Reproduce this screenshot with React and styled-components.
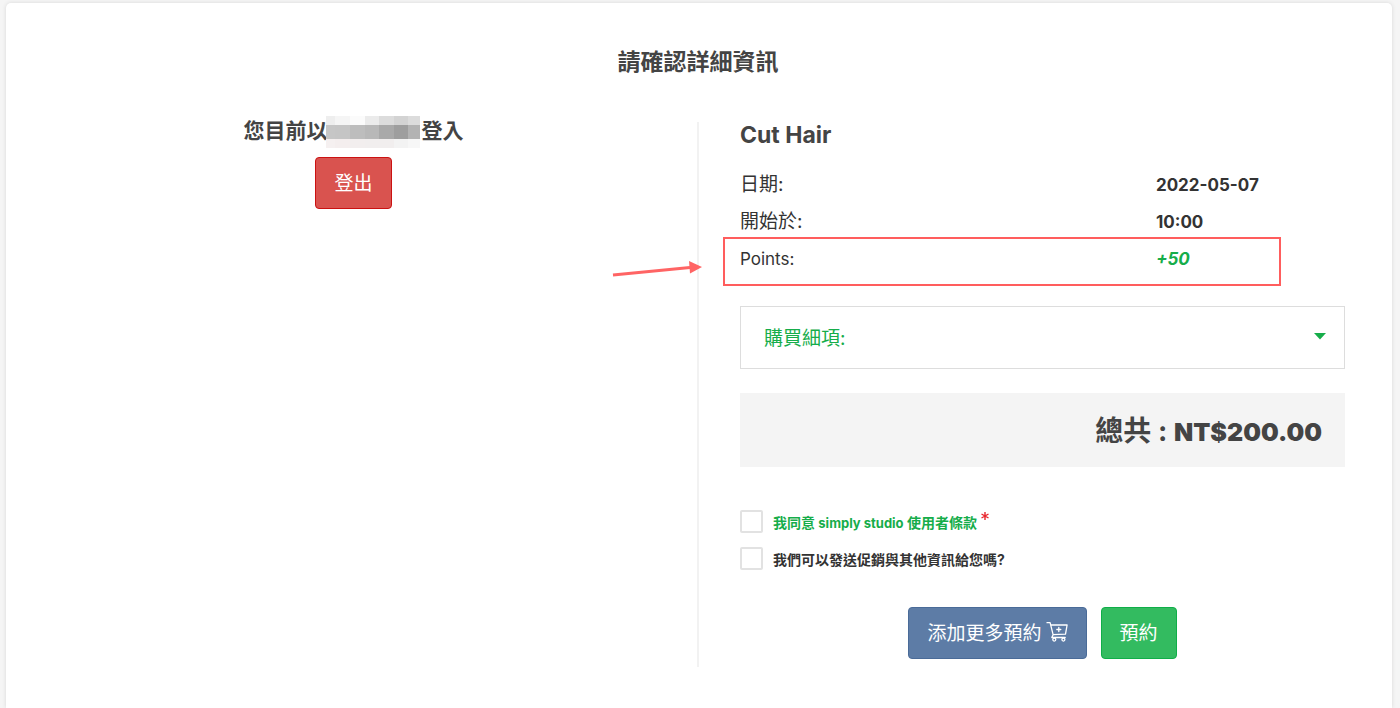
import React, { useState } from "react";
import styled, { createGlobalStyle, css } from "styled-components";

const GlobalStyle = createGlobalStyle`
  * {
    box-sizing: border-box;
  }

  body {
    margin: 0;
    background: #f5f5f5;
    color: #333;
    font-family: Inter, "Noto Sans CJK TC", sans-serif;
    font-size: 18px;
  }

  button {
    font-family: inherit;
    cursor: pointer;
  }
`;

const Card = styled.main`
  min-height: calc(100vh - 3px);
  margin: 3px 8px 0 6px;
  padding: 43px 47px 40px 45px;
  background: #fff;
  border-radius: 5px 5px 0 0;
  box-shadow: 0 0 4px rgba(0, 0, 0, 0.12);
`;

const Title = styled.h1`
  margin: 0 0 38px;
  font-size: 23px;
  line-height: 32px;
  font-weight: 700;
  text-align: center;
  color: #444;
`;

const Columns = styled.div`
  display: flex;
`;

const Account = styled.section`
  flex: 1;
  padding-right: 41px;
  text-align: center;
`;

const Details = styled.section`
  flex: 1;
  margin-top: 6px;
  padding: 0 0 8px 41px;
  border-left: 2px solid #f2f2f2;
`;

const LoginText = styled.h2`
  display: flex;
  justify-content: center;
  margin: 0 0 9px;
  height: 32px;
  font-size: 21px;
  line-height: 30px;
  font-weight: 700;
  color: #444;
`;

const HiddenName = styled.svg`
  width: 94px;
  height: 32px;
  margin: 0 2px 0 -2px;
`;

const tones = {
  red: css`
    background: #d9534f;
    border-color: #cb1212;
  `,
  blue: css`
    background: #5d7ca6;
    border-color: #4a6b98;
  `,
  green: css`
    background: #33bb60;
    border-color: #0fae48;
  `,
};

const Button = styled.button`
  display: inline-flex;
  align-items: center;
  gap: 4px;
  height: 52px;
  padding: 0 18px 4px;
  border: 1px solid;
  border-radius: 4px;
  font-size: 19px;
  color: #fff;
  ${({ $tone }) => tones[$tone]}
`;

const ServiceName = styled.h2`
  margin: 0 0 18px;
  font-size: 23px;
  line-height: 26px;
  font-weight: 700;
  color: #444;
`;

const List = styled.dl`
  margin: 0;
`;

const Row = styled.div`
  position: relative;
  display: grid;
  grid-template-columns: 11fr 5fr;
  align-items: center;
  height: 37px;
`;

const Term = styled.dt`
  ${({ $latin }) =>
    $latin
      ? css`
          font-size: 17px;
        `
      : css`
          padding-bottom: 4px;
          font-size: 19px;
        `}
`;

const Value = styled.dd`
  margin: 0;
  font-size: 17px;
  font-weight: 700;
  ${({ $points }) =>
    $points &&
    css`
      font-style: italic;
      color: #16ad4a;
    `}
`;

const Highlight = styled.span`
  position: absolute;
  top: -3px;
  bottom: -9px;
  left: -17px;
  right: 64px;
  border: 2px solid #ff5d5d;
`;

const Arrow = styled.svg`
  position: absolute;
  top: 20px;
  left: -128px;
  width: 90px;
  height: 20px;
`;

const Breakdown = styled.button`
  display: flex;
  align-items: center;
  justify-content: space-between;
  width: 100%;
  height: 63px;
  margin-top: 29px;
  padding: 0 18px 2px 23px;
  border: 1px solid #ddd;
  background: #fff;
  font-size: 19px;
  color: #16ad4a;
`;

const Total = styled.p`
  display: flex;
  align-items: baseline;
  justify-content: flex-end;
  height: 74px;
  margin: 24px 0 36px;
  padding-right: 23px;
  background: #f4f4f4;
  font-size: 28px;
  line-height: 76px;
  font-weight: 700;
  color: #444;
  white-space: pre;
`;

const Amount = styled.strong`
  font-size: 25px;
  font-weight: 900;
`;

const CheckRow = styled.div`
  display: flex;
  align-items: center;
  gap: 10px;
  height: 37px;
  font-size: 14px;
  font-weight: 700;

  a {
    color: #16ad4a;
    text-decoration: none;
  }
`;

const Brand = styled.span`
  font-size: 13px;
`;

const Checkbox = styled.input`
  appearance: none;
  width: 23px;
  height: 23px;
  margin: 0;
  border: 2px solid #e2e2e2;
  border-radius: 2px;
  background: #fff;

  &:checked {
    background: #33bb60;
  }
`;

const Required = styled.svg`
  width: 8px;
  height: 8px;
  margin-left: 4px;
  vertical-align: 8px;
`;

const Actions = styled.div`
  display: flex;
  justify-content: center;
  gap: 14px;
  margin-top: 30px;
`;

const mosaic = [
  { y: 0, h: 9, fills: ["#eee", "#f5f5f5", "#fbfbfb", "#ebebeb", "#dcdcdc", "#d3d3d3", "#dcdcdc"] },
  { y: 9, h: 14, fills: ["#c6c6c6", "#c5c5c5", "#bdbdbd", "#b8b8b8", "#a9a9a9", "#9e9e9e", "#b3b3b3"] },
  { y: 23, h: 9, fills: ["#f5f0f0", "#f4eeee", "#f2eeee", "#f1eeee", "#f1eeee", "#f3f3f3", "#f7f7f7"] },
];
const mosaicX = [0, 9, 24, 39, 53, 68, 82, 94];

const Mosaic = () => (
  <HiddenName viewBox="0 0 94 32" shapeRendering="crispEdges" aria-hidden="true">
    {mosaic.map(({ y, h, fills }) =>
      fills.map((fill, i) => (
        <rect
          key={`${y}-${i}`}
          x={mosaicX[i]}
          y={y}
          width={mosaicX[i + 1] - mosaicX[i]}
          height={h}
          fill={fill}
        />
      ))
    )}
  </HiddenName>
);

const CartIcon = () => (
  <svg
    width="22"
    height="21"
    viewBox="0 0 22 21"
    fill="none"
    stroke="#fff"
    strokeWidth="1.3"
    strokeLinecap="round"
    strokeLinejoin="round"
    aria-hidden="true"
  >
    <path d="M1 1.7h3.1l3 12-1.3 2.8h13.4M4.7 4h16.4l-1.6 9.2-12.4.5" />
    <path d="M12.8 6.5v4M10.8 8.5h4" />
    <circle cx="8.3" cy="18.6" r="1.5" />
    <circle cx="17.4" cy="18.6" r="1.5" />
  </svg>
);

const App = () => {
  const [open, setOpen] = useState(false);

  return (
    <>
      <GlobalStyle />
      <Card>
        <Title>請確認詳細資訊</Title>
        <Columns>
          <Account>
            <LoginText>
              您目前以
              <Mosaic />
              登入
            </LoginText>
            <Button type="button" $tone="red">
              登出
            </Button>
          </Account>

          <Details>
            <ServiceName>Cut Hair</ServiceName>
            <List>
              <Row>
                <Term>日期:</Term>
                <Value>2022-05-07</Value>
              </Row>
              <Row>
                <Term>開始於:</Term>
                <Value>10:00</Value>
              </Row>
              <Row>
                <Term $latin>Points:</Term>
                <Value $points>
                  +50
                  <Highlight />
                  <Arrow viewBox="0 0 90 20" aria-hidden="true">
                    <path d="M1 15 78 7.5" stroke="#ff6464" strokeWidth="3" />
                    <path d="M77 1 90 7 78 13.500z" fill="#ff6464" />
                  </Arrow>
                </Value>
              </Row>
            </List>

            <Breakdown
              type="button"
              aria-expanded={open}
              onClick={() => setOpen(!open)}
            >
              購買細項:
              <svg width="12" height="7" viewBox="0 0 12 7" aria-hidden="true">
                <path d="M0 0h12L6 6.500z" fill="#16ad4a" />
              </svg>
            </Breakdown>

            <Total>
              總共 : <Amount>NT$200.00</Amount>
            </Total>

            <CheckRow>
              <Checkbox type="checkbox" id="terms" required />
              <label htmlFor="terms">
                <a href="#terms">
                  我同意 <Brand>simply studio</Brand> 使用者條款
                </a>
                <Required viewBox="0 0 8 8" aria-hidden="true">
                  <path
                    d="M4 0v8M.5 2l7 4M7.500 2l-7 4"
                    stroke="#e8262d"
                    strokeWidth="1.4"
                  />
                </Required>
              </label>
            </CheckRow>
            <CheckRow>
              <Checkbox type="checkbox" id="promo" />
              <label htmlFor="promo">我們可以發送促銷與其他資訊給您嗎?</label>
            </CheckRow>

            <Actions>
              <Button type="button" $tone="blue">
                添加更多預約
                <CartIcon />
              </Button>
              <Button type="button" $tone="green">
                預約
              </Button>
            </Actions>
          </Details>
        </Columns>
      </Card>
    </>
  );
};

export default App;
